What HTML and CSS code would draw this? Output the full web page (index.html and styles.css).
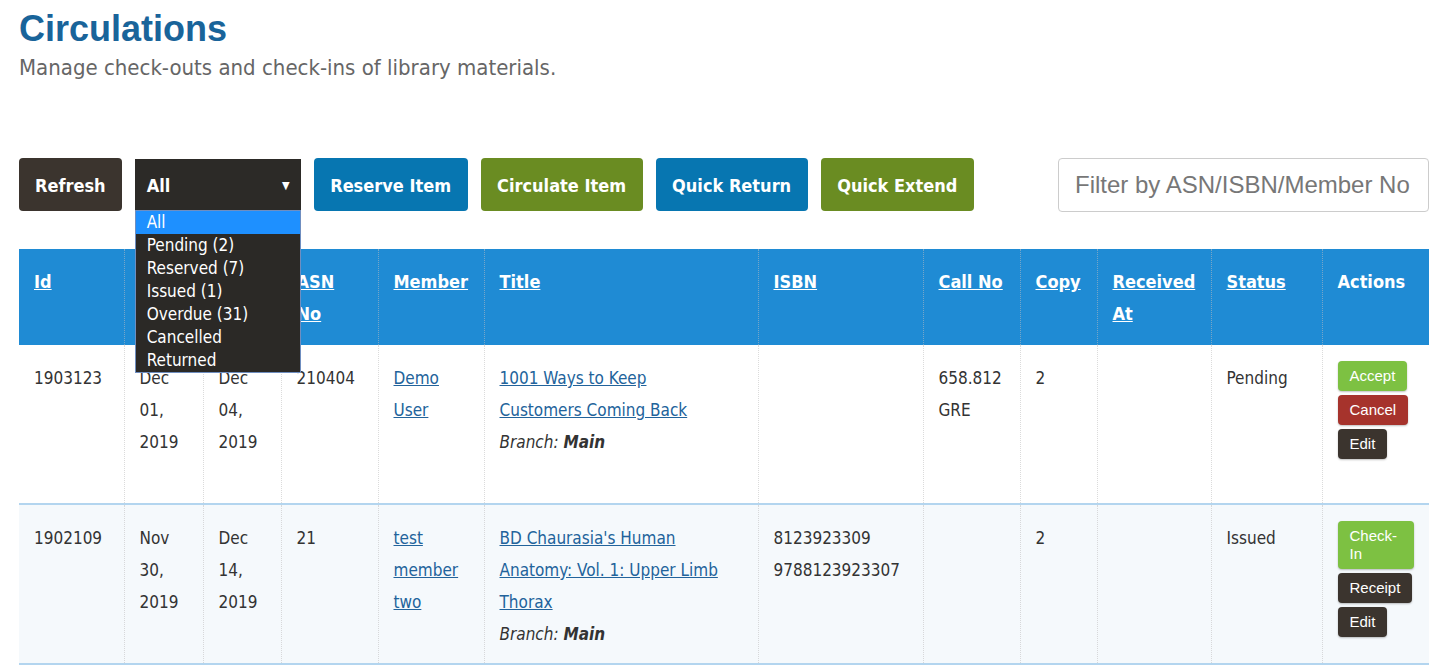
FILE: index.html
```html
<!DOCTYPE html>
<html lang="en">
<head>
<meta charset="utf-8">
<title>Circulations</title>
<link rel="stylesheet" href="styles.css">
</head>
<body>
<div class="page">
  <h1 class="title">Circulations</h1>
  <p class="subtitle">Manage check-outs and check-ins of library materials.</p>

  <div class="toolbar">
    <button class="btn btn-dark">Refresh</button>
    <div class="select-wrap">
      <div class="select"><span>All</span><span class="caret">&#9660;</span></div>
      <ul class="options">
        <li class="active">All</li>
        <li>Pending (2)</li>
        <li>Reserved (7)</li>
        <li>Issued (1)</li>
        <li>Overdue (31)</li>
        <li>Cancelled</li>
        <li>Returned</li>
      </ul>
    </div>
    <button class="btn btn-blue">Reserve Item</button>
    <button class="btn btn-green">Circulate Item</button>
    <button class="btn btn-blue">Quick Return</button>
    <button class="btn btn-green">Quick Extend</button>
    <input class="filter" type="text" placeholder="Filter by ASN/ISBN/Member No">
  </div>

  <table class="grid">
    <colgroup>
      <col class="c-id"><col class="c-d1"><col class="c-d2"><col class="c-asn"><col class="c-mem">
      <col class="c-title"><col class="c-isbn"><col class="c-call"><col class="c-copy">
      <col class="c-rec"><col class="c-status"><col class="c-act">
    </colgroup>
    <thead>
      <tr>
        <th><a href="#">Id</a></th>
        <th><a href="#">Issued</a></th>
        <th><a href="#">Due</a></th>
        <th><a href="#">ASN No</a></th>
        <th><a href="#">Member</a></th>
        <th><a href="#">Title</a></th>
        <th><a href="#">ISBN</a></th>
        <th><a href="#">Call No</a></th>
        <th><a href="#">Copy</a></th>
        <th><a href="#">Received At</a></th>
        <th><a href="#">Status</a></th>
        <th>Actions</th>
      </tr>
    </thead>
    <tbody>
      <tr>
        <td>1903123</td>
        <td>Dec 01, 2019</td>
        <td>Dec 04, 2019</td>
        <td>210404</td>
        <td><a href="#">Demo User</a></td>
        <td class="title-cell"><a href="#">1001 Ways to Keep Customers Coming Back</a><div class="branch">Branch: <b>Main</b></div></td>
        <td></td>
        <td>658.812 GRE</td>
        <td>2</td>
        <td></td>
        <td>Pending</td>
        <td class="act-cell"><div class="actions"><button class="abtn a-green">Accept</button><button class="abtn a-red">Cancel</button><button class="abtn a-dark">Edit</button></div></td>
      </tr>
      <tr class="alt">
        <td>1902109</td>
        <td>Nov 30, 2019</td>
        <td>Dec 14, 2019</td>
        <td>21</td>
        <td><a href="#">test member two</a></td>
        <td class="title-cell"><a href="#">BD Chaurasia's Human Anatomy: Vol. 1: Upper Limb Thorax</a><div class="branch">Branch: <b>Main</b></div></td>
        <td>8123923309 9788123923307</td>
        <td></td>
        <td>2</td>
        <td></td>
        <td>Issued</td>
        <td class="act-cell"><div class="actions"><button class="abtn a-green">Check-In</button><button class="abtn a-dark">Receipt</button><button class="abtn a-dark">Edit</button></div></td>
      </tr>
    </tbody>
  </table>
</div>
</body>
</html>
```

FILE: styles.css
```css
* { box-sizing: border-box; }
html, body { margin: 0; padding: 0; background: #fff; }
body {
  font-family: "DejaVu Sans Condensed", "Liberation Sans", sans-serif;
  color: #333;
  overflow: hidden;
}
.page { padding: 8px 22px 0 19px; }

.title {
  margin: 0;
  font-family: "Liberation Sans", Arial, sans-serif;
  font-size: 36px;
  font-weight: bold;
  color: #19649a;
  line-height: 41px;
}
.subtitle {
  margin: 4px 0 0;
  font-size: 22px;
  line-height: 30px;
  color: #666;
}

.toolbar {
  display: flex;
  align-items: flex-start;
  gap: 13px;
  margin-top: 75px;
}
.btn {
  height: 53px;
  padding: 1px 16.5px 0;
  border: 0;
  border-radius: 4px;
  font-family: inherit;
  font-size: 18px;
  font-weight: bold;
  color: #fff;
}
.btn-dark { background: #3b342e; padding: 1px 16px 0; }
.btn-blue { background: #0776b1; }
.btn-green { background: #6a8c22; }

.select-wrap { position: relative; width: 166px; margin-top: 1px; }
.select {
  height: 51px;
  background: #2c2a27;
  color: #fff;
  font-size: 18px;
  font-weight: bold;
  display: flex;
  align-items: center;
  justify-content: space-between;
  padding: 1px 11px 0 12px;
}
.caret { font-size: 11px; font-weight: normal; }
.options {
  position: absolute;
  top: 51px;
  left: 0;
  width: 166px;
  margin: 0;
  padding: 0;
  list-style: none;
  background: #2b2926;
  border: 1px solid #6f8ec0;
  z-index: 5;
}
.options li {
  height: 23px;
  line-height: 23px;
  padding-left: 11px;
  font-size: 17px;
  color: #fff;
}
.options li.active { background: #1e90ff; }

.filter {
  margin-left: auto;
  width: 371px;
  height: 54px;
  border: 1px solid #ccc;
  border-radius: 4px;
  padding: 0 16px;
  font-family: "Liberation Sans", Arial, sans-serif;
  font-size: 24px;
  color: #333;
  background: #fff;
}
.filter::placeholder { color: #777; }

.grid {
  margin-top: 37px;
  width: 1410px;
  table-layout: fixed;
  border-collapse: collapse;
}
.c-id { width: 105px; }
.c-d1 { width: 79px; }
.c-d2 { width: 78px; }
.c-asn { width: 97px; }
.c-mem { width: 106px; }
.c-title { width: 274px; }
.c-isbn { width: 165px; }
.c-call { width: 97px; }
.c-copy { width: 77px; }
.c-rec { width: 114px; }
.c-status { width: 111px; }
.c-act { width: 107px; }

.grid th, .grid td {
  text-align: left;
  vertical-align: top;
  padding: 16px 15px;
  border-left: 1px dotted rgba(190, 190, 190, 0.55);
}
.grid th:first-child, .grid td:first-child { border-left: 0; }
.grid th {
  background: #1f8bd4;
  color: #fff;
  font-size: 18px;
  font-weight: bold;
  line-height: 32px;
  height: 96px;
  padding-top: 17px;
  padding-bottom: 15px;
}
.grid th a { color: #fff; }
.grid td {
  font-size: 17px;
  line-height: 32px;
  height: 159px;
  padding-top: 17px;
  padding-bottom: 13px;
  border-bottom: 2px solid #b3d5ef;
}
.grid td.act-cell { padding-top: 16px; padding-bottom: 14px; }
.grid td.title-cell { padding-right: 30px; }
.grid tr.alt td { background: #f5f9fc; }
.grid td a { color: #22639b; }

.branch { font-style: italic; }
.branch b { font-weight: bold; }

.actions {
  display: flex;
  flex-direction: column;
  align-items: flex-start;
  gap: 4px;
}
.abtn {
  border: 0;
  border-radius: 4px;
  padding: 6px 12px;
  font-family: "Liberation Sans", Arial, sans-serif;
  font-size: 15px;
  line-height: 18px;
  color: #fff;
  text-align: left;
  box-shadow: 0 1px 2px rgba(0, 0, 0, 0.25);
}
.a-green { background: #7dc142; }
.a-red { background: #a6332c; }
.a-dark { background: #3b342e; }
```
